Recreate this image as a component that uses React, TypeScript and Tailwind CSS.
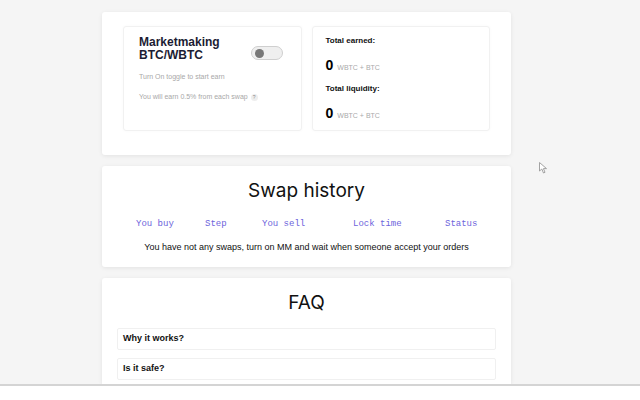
import React from "react";

const sans = "font-['Liberation_Sans',Arial,sans-serif]";

const Toggle = () => (
  <div className="mt-[10px] flex h-[14px] w-[32px] items-center rounded-full border border-[#cfcfcf] bg-[#efefef] px-[3px]">
    <div className="size-[9px] rounded-full bg-[#777]" />
  </div>
);

const Amount = () => (
  <div className="flex items-baseline gap-[4px]">
    <span className="text-[14px] leading-[16px] font-bold text-black">0</span>
    <span className="text-[7px] text-[#aaa]">WBTC + BTC</span>
  </div>
);

const columns = ["You buy", "Step", "You sell", "Lock time", "Status"];

const App = () => {
  return (
    <div className={`relative flex h-[400px] w-[640px] flex-col overflow-hidden ${sans}`}>
      <div className="flex flex-1 flex-col items-start gap-[11px] overflow-hidden bg-[#f5f5f5] pt-[12px] pl-[102px]">
        {/* market making card */}
        <div className="w-[409px] rounded-[3px] bg-white px-[21px] pt-[14px] pb-[24px] shadow-[0_1px_4px_rgba(0,0,0,0.08)]">
          <div className="grid grid-cols-2 gap-[10px]">
            <div className="h-[105px] rounded-[3px] border border-[#f1f1f1] px-[15px] pt-[9px] shadow-[0_0_3px_rgba(0,0,0,0.03)]">
              <div className="flex items-start justify-between pr-[3px]">
                <div className="text-[12px] leading-[13px] font-bold text-[#1c1c33]">
                  Marketmaking
                  <br />
                  BTC/WBTC
                </div>
                <Toggle />
              </div>
              <div className="mt-[10px] text-[7px] leading-[10px] text-[#a8a8a8]">Turn On toggle to start earn</div>
              <div className="mt-[10px] flex items-center gap-[3px] text-[7px] leading-[10px] text-[#a8a8a8]">
                You will earn 0.5% from each swap
                <span className="flex size-[7px] items-center justify-center rounded-full bg-[#eee] text-[5px] text-[#888]">?</span>
              </div>
            </div>
            <div className="grid h-[105px] auto-rows-[24px] items-center rounded-[3px] border border-[#f1f1f1] px-[13px] pt-[2px] shadow-[0_0_3px_rgba(0,0,0,0.03)]">
              <div className="text-[8px] leading-[12px] font-bold text-[#111]">Total earned:</div>
              <Amount />
              <div className="text-[8px] leading-[12px] font-bold text-[#111]">Total liquidity:</div>
              <Amount />
            </div>
          </div>
        </div>

        {/* swap history card */}
        <div className="flex h-[101px] w-[409px] flex-col rounded-[3px] bg-white shadow-[0_1px_4px_rgba(0,0,0,0.08)]">
          <h2 className="mt-[13px] text-center font-['Inter',sans-serif] text-[19px] leading-[24px] text-[#111]">Swap history</h2>
          <div className="mt-[15px] grid grid-cols-[69px_57px_91px_92px_auto] pl-[34px] font-['Liberation_Mono',monospace] text-[9px] leading-[12px] text-[#6d64dc]">
            {columns.map((c) => (
              <span key={c}>{c}</span>
            ))}
          </div>
          <p className="mt-[11px] text-center text-[9px] leading-[12px] text-[#111]">
            You have not any swaps, turn on MM and wait when someone accept your orders
          </p>
        </div>

        {/* faq card */}
        <div className="flex w-[409px] flex-1 flex-col rounded-t-[3px] bg-white px-[15px] shadow-[0_1px_4px_rgba(0,0,0,0.08)]">
          <h2 className="mt-[13px] text-center font-['Inter',sans-serif] text-[19px] leading-[24px] text-[#111]">FAQ</h2>
          <div className="mt-[13px] flex flex-col gap-[8px]">
            {["Why it works?", "Is it safe?"].map((q) => (
              <div
                key={q}
                className="flex h-[22px] items-center rounded-[2px] border border-[#f0f0f0] px-[5px] text-[9px] font-bold text-[#111]"
              >
                {q}
              </div>
            ))}
          </div>
        </div>
      </div>
      <div className="h-[16px] border-t-2 border-[#d4d4d4] bg-white" />

      {/* mouse cursor */}
      <svg className="absolute top-[162px] left-[539px]" width="9" height="12" viewBox="0 0 9 12">
        <path d="M0.5 0.5 L0.5 9 L2.8 7 L4.5 11 L6 10.3 L4.4 6.6 L7.5 6.6 Z" fill="#fff" stroke="#999" strokeWidth="0.9" />
      </svg>
    </div>
  );
};

export default App;
